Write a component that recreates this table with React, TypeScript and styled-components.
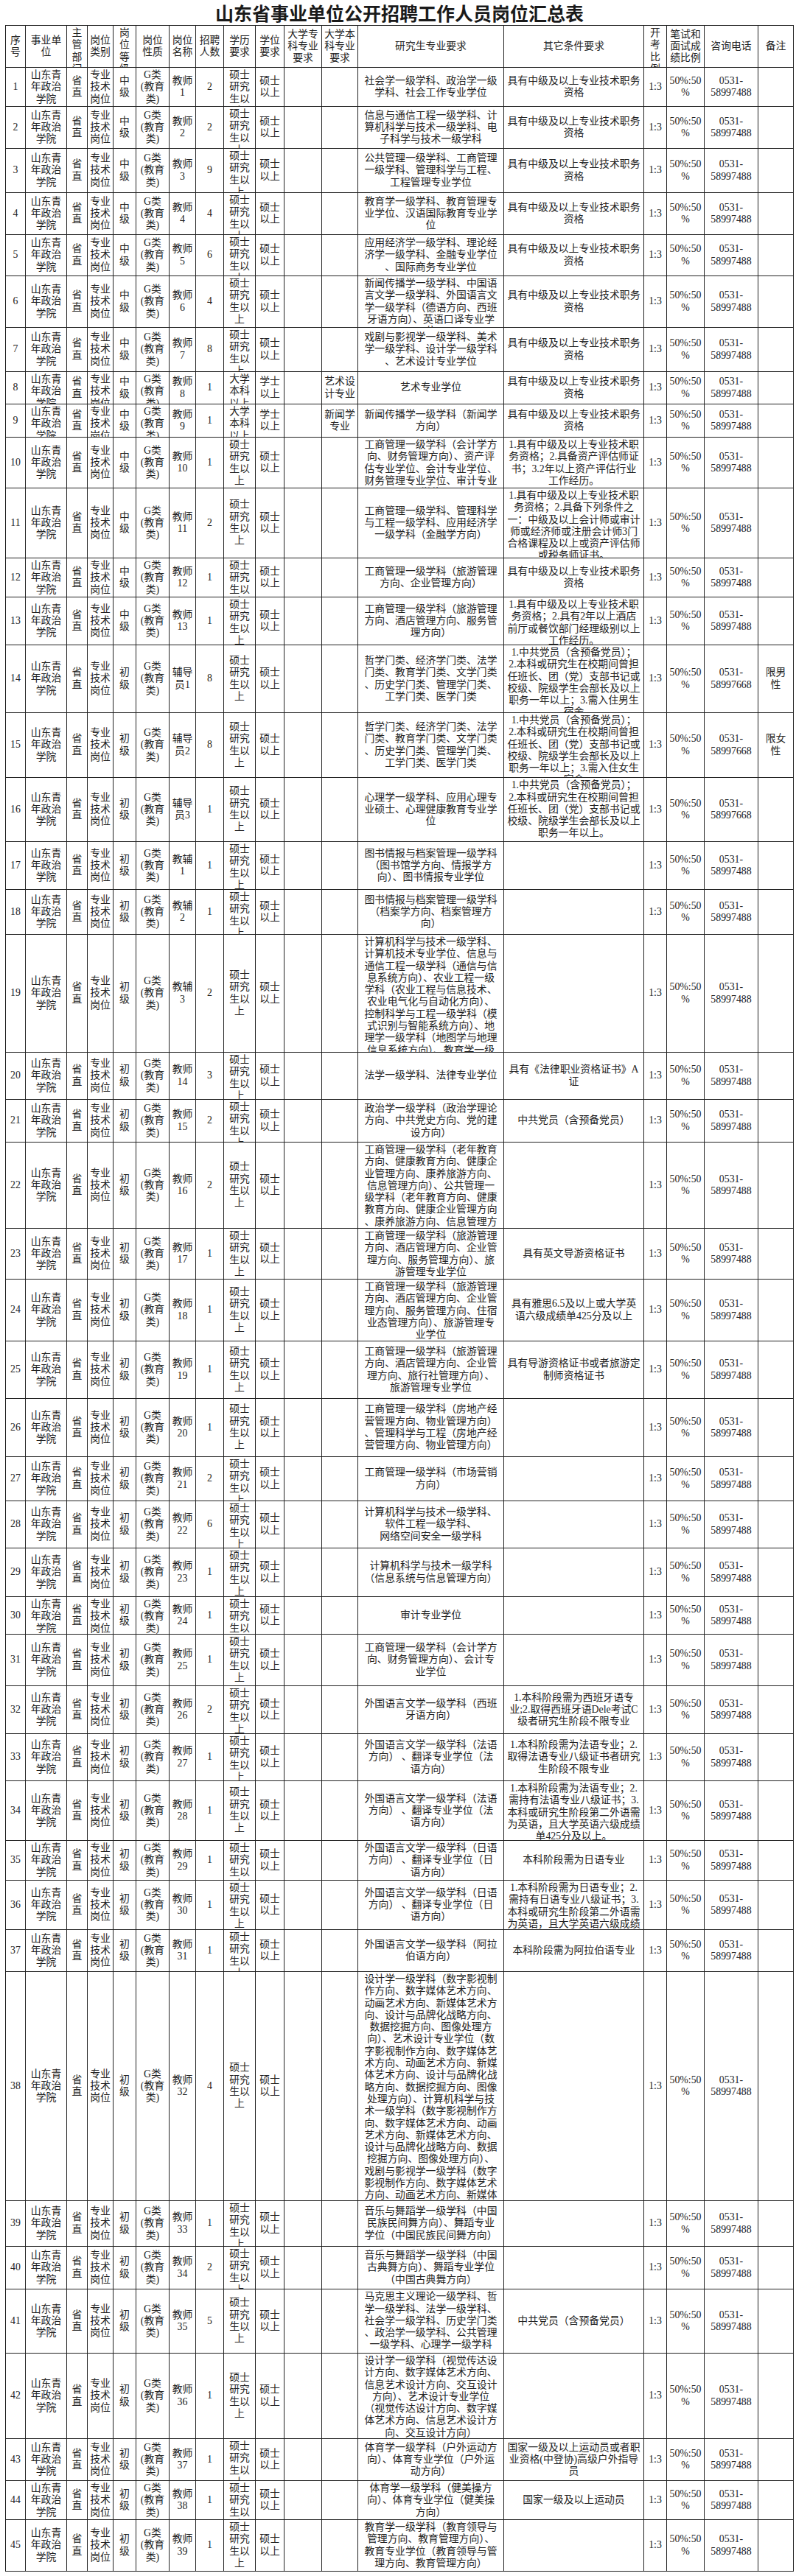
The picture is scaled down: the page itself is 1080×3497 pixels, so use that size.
import styled, { createGlobalStyle } from "styled-components"

const GlobalStyle = createGlobalStyle`
  html, body {
    margin: 0;
    padding: 0;
    background: #fff;
  }
  body {
    font-family: "Liberation Serif", "Noto Sans CJK SC", serif;
    color: #222;
  }
`

const COLS =
  "27px 56px 28px 35px 31px 45px 36px 38px 43px 39px 51px 49px 198px 190px 31px 51px 73px 48px"

const PHONE = "0531-58997488"
const QUAL = "具有中级及以上专业技术职务\n资格"
const PHIL = "哲学门类、经济学门类、法学\n门类、教育学门类、文学门类\n、历史学门类、管理学门类、\n工学门类、医学门类"
const PARTY = "中共党员（含预备党员）"
const FR = "外国语言文学一级学科（法语\n方向） 、翻译专业学位（法\n语方向）"
const JP = "外国语言文学一级学科（日语\n方向） 、翻译专业学位（日\n语方向）"

const HEAD = [
  "序号", "事业单位", "主管部门", "岗位类别", "岗位等级", "岗位性质", "岗位名称", "招聘人数", "学历要求",
  "学位要求", "大学专科专业要求", "大学本科专业要求", "研究生专业要求", "其它条件要求", "开考比例",
  "笔试和面试成绩比例", "咨询电话", "备注",
]

type Job = {
  h: number
  name: string
  n: number
  grad: string
  other?: string
  bk?: boolean
  ug?: string
  phone?: string
  note?: string
}

const JOBS: Job[] = [
  { h: 53, name: "教师1", n: 2, grad: "社会学一级学科、政治学一级\n学科、社会工作专业学位", other: QUAL },
  { h: 57, name: "教师2", n: 2, grad: "信息与通信工程一级学科、计\n算机科学与技术一级学科、电\n子科学与技术一级学科", other: QUAL },
  { h: 60, name: "教师3", n: 9, grad: "公共管理一级学科、工商管理\n一级学科、管理科学与工程、\n工程管理专业学位", other: QUAL },
  { h: 57, name: "教师4", n: 4, grad: "教育学一级学科、教育管理专\n业学位、汉语国际教育专业学\n位", other: QUAL },
  { h: 56, name: "教师5", n: 6, grad: "应用经济学一级学科、理论经\n济学一级学科、金融专业学位\n、国际商务专业学位", other: QUAL },
  { h: 70, name: "教师6", n: 4, grad: "新闻传播学一级学科、中国语\n言文学一级学科、外国语言文\n学一级学科（德语方向、西班\n牙语方向）、英语口译专业学\n位", other: QUAL },
  { h: 60, name: "教师7", n: 8, grad: "戏剧与影视学一级学科、美术\n学一级学科、设计学一级学科\n、艺术设计专业学位", other: QUAL },
  { h: 44, name: "教师8", n: 1, bk: true, ug: "艺术设计专业", grad: "艺术专业学位", other: QUAL },
  { h: 45, name: "教师9", n: 1, bk: true, ug: "新闻学专业", grad: "新闻传播学一级学科（新闻学\n方向）", other: QUAL },
  { h: 69, name: "教师10", n: 1, grad: "工商管理一级学科（会计学方\n向、财务管理方向）、资产评\n估专业学位、会计专业学位、\n财务管理专业学位、审计专业\n学位", other: "1.具有中级及以上专业技术职\n务资格；2.具备资产评估师证\n书；3.2年以上资产评估行业\n工作经历。" },
  { h: 95, name: "教师11", n: 2, grad: "工商管理一级学科、管理科学\n与工程一级学科、应用经济学\n一级学科（金融学方向）", other: "1.具有中级及以上专业技术职\n务资格；2.具备下列条件之\n一：中级及以上会计师或审计\n师或经济师或注册会计师3门\n合格课程及以上或资产评估师\n或税务师证书。" },
  { h: 53, name: "教师12", n: 1, grad: "工商管理一级学科（旅游管理\n方向、企业管理方向）", other: QUAL },
  { h: 65, name: "教师13", n: 1, grad: "工商管理一级学科（旅游管理\n方向、酒店管理方向、服务管\n理方向）", other: "1.具有中级及以上专业技术职\n务资格；2.具有2年以上酒店\n前厅或餐饮部门经理级别以上\n工作经历。" },
  { h: 92, name: "辅导员1", n: 8, grad: PHIL, other: "1.中共党员（含预备党员）；\n2.本科或研究生在校期间曾担\n任班长、团（党）支部书记或\n校级、院级学生会部长及以上\n职务一年以上；3.需入住男生\n宿舍", phone: "0531-58997668", note: "限男性" },
  { h: 88, name: "辅导员2", n: 8, grad: PHIL, other: "1.中共党员（含预备党员）；\n2.本科或研究生在校期间曾担\n任班长、团（党）支部书记或\n校级、院级学生会部长及以上\n职务一年以上；3.需入住女生\n宿舍", phone: "0531-58997668", note: "限女性" },
  { h: 87, name: "辅导员3", n: 1, grad: "心理学一级学科、应用心理专\n业硕士、心理健康教育专业学\n位", other: "1.中共党员（含预备党员）；\n2.本科或研究生在校期间曾担\n任班长、团（党）支部书记或\n校级、院级学生会部长及以上\n职务一年以上。", phone: "0531-58997668" },
  { h: 65, name: "教辅1", n: 1, grad: "图书情报与档案管理一级学科\n（图书馆学方向、情报学方\n向）、图书情报专业学位" },
  { h: 61, name: "教辅2", n: 1, grad: "图书情报与档案管理一级学科\n（档案学方向、档案管理方\n向）" },
  { h: 160, name: "教辅3", n: 2, grad: "计算机科学与技术一级学科、\n计算机技术专业学位、信息与\n通信工程一级学科（通信与信\n息系统方向）、农业工程一级\n学科（农业工程与信息技术、\n农业电气化与自动化方向）、\n控制科学与工程一级学科（模\n式识别与智能系统方向）、地\n理学一级学科（地图学与地理\n信息系统方向）、教育学一级\n学科（教育技术学方向）" },
  { h: 64, name: "教师14", n: 3, grad: "法学一级学科、法律专业学位", other: "具有《法律职业资格证书》A\n证" },
  { h: 58, name: "教师15", n: 2, grad: "政治学一级学科（政治学理论\n方向、中共党史方向、党的建\n设方向）", other: PARTY },
  { h: 117, name: "教师16", n: 2, grad: "工商管理一级学科（老年教育\n方向、健康教育方向、健康企\n业管理方向、康养旅游方向、\n信息管理方向）、公共管理一\n级学科（老年教育方向、健康\n教育方向、健康企业管理方向\n、康养旅游方向、信息管理方\n向）" },
  { h: 69, name: "教师17", n: 1, grad: "工商管理一级学科（旅游管理\n方向、酒店管理方向、企业管\n理方向、服务管理方向）、旅\n游管理专业学位", other: "具有英文导游资格证书" },
  { h: 84, name: "教师18", n: 1, grad: "工商管理一级学科（旅游管理\n方向、酒店管理方向、企业管\n理方向、服务管理方向、住宿\n业态管理方向）、旅游管理专\n业学位", other: "具有雅思6.5及以上或大学英\n语六级成绩单425分及以上" },
  { h: 78, name: "教师19", n: 1, grad: "工商管理一级学科（旅游管理\n方向、酒店管理方向、企业管\n理方向、旅行社管理方向）、\n旅游管理专业学位", other: "具有导游资格证书或者旅游定\n制师资格证书" },
  { h: 79, name: "教师20", n: 1, grad: "工商管理一级学科（房地产经\n营管理方向、物业管理方向）\n、管理科学与工程（房地产经\n营管理方向、物业管理方向）" },
  { h: 60, name: "教师21", n: 2, grad: "工商管理一级学科（市场营销\n方向）" },
  { h: 64, name: "教师22", n: 6, grad: "计算机科学与技术一级学科、\n软件工程一级学科、\n网络空间安全一级学科" },
  { h: 66, name: "教师23", n: 1, grad: "计算机科学与技术一级学科\n（信息系统与信息管理方向）" },
  { h: 51, name: "教师24", n: 1, grad: "审计专业学位" },
  { h: 70, name: "教师25", n: 1, grad: "工商管理一级学科（会计学方\n向、财务管理方向）、会计专\n业学位" },
  { h: 65, name: "教师26", n: 2, grad: "外国语言文学一级学科（西班\n牙语方向）", other: "1.本科阶段需为西班牙语专\n业;2.取得西班牙语Dele考试C\n级者研究生阶段不限专业" },
  { h: 64, name: "教师27", n: 1, grad: FR, other: "1.本科阶段需为法语专业；2.\n取得法语专业八级证书者研究\n生阶段不限专业" },
  { h: 81, name: "教师28", n: 1, grad: FR, other: "1.本科阶段需为法语专业；2.\n需持有法语专业八级证书；3.\n本科或研究生阶段第二外语需\n为英语，且大学英语六级成绩\n单425分及以上。" },
  { h: 54, name: "教师29", n: 1, grad: JP, other: "本科阶段需为日语专业" },
  { h: 67, name: "教师30", n: 1, grad: JP, other: "1.本科阶段需为日语专业；2.\n需持有日语专业八级证书；3.\n本科或研究生阶段第二外语需\n为英语，且大学英语六级成绩\n单425分及以上。" },
  { h: 57, name: "教师31", n: 1, grad: "外国语言文学一级学科（阿拉\n伯语方向）", other: "本科阶段需为阿拉伯语专业" },
  { h: 311, name: "教师32", n: 4, grad: "设计学一级学科（数字影视制\n作方向、数字媒体艺术方向、\n动画艺术方向、新媒体艺术方\n向、设计与品牌化战略方向、\n数据挖掘方向、图像处理方\n向）、艺术设计专业学位（数\n字影视制作方向、数字媒体艺\n术方向、动画艺术方向、新媒\n体艺术方向、设计与品牌化战\n略方向、数据挖掘方向、图像\n处理方向）、计算机科学与技\n术一级学科（数字影视制作方\n向、数字媒体艺术方向、动画\n艺术方向、新媒体艺术方向、\n设计与品牌化战略方向、数据\n挖掘方向、图像处理方向）、\n戏剧与影视学一级学科（数字\n影视制作方向、数字媒体艺术\n方向、动画艺术方向、新媒体\n艺术方向）" },
  { h: 62, name: "教师33", n: 1, grad: "音乐与舞蹈学一级学科（中国\n民族民间舞方向）、舞蹈专业\n学位（中国民族民间舞方向）" },
  { h: 58, name: "教师34", n: 2, grad: "音乐与舞蹈学一级学科（中国\n古典舞方向）、舞蹈专业学位\n（中国古典舞方向）" },
  { h: 87, name: "教师35", n: 5, grad: "马克思主义理论一级学科、哲\n学一级学科、法学一级学科、\n社会学一级学科、历史学门类\n、政治学一级学科、公共管理\n一级学科、心理学一级学科", other: PARTY },
  { h: 116, name: "教师36", n: 1, grad: "设计学一级学科（视觉传达设\n计方向、数字媒体艺术方向、\n信息艺术设计方向、交互设计\n方向）、艺术设计专业学位\n（视觉传达设计方向、数字媒\n体艺术方向、信息艺术设计方\n向、交互设计方向）" },
  { h: 57, name: "教师37", n: 1, grad: "体育学一级学科（户外运动方\n向）、体育专业学位（户外运\n动方向）", other: "国家一级及以上运动员或者职\n业资格(中登协)高级户外指导\n员" },
  { h: 53, name: "教师38", n: 1, grad: "体育学一级学科（健美操方\n向）、体育专业学位（健美操\n方向）", other: "国家一级及以上运动员" },
  { h: 70, name: "教师39", n: 1, grad: "教育学一级学科（教育领导与\n管理方向、教育管理方向）、\n教育专业学位（教育领导与管\n理方向、教育管理方向）" },
]

const Page = styled.div`
  width: 1080px;
  padding-left: 7px;
  box-sizing: border-box;
`

const Title = styled.h1`
  margin: 0;
  width: 1070px;
  height: 34px;
  line-height: 34px;
  text-align: center;
  font-family: "Noto Sans CJK SC", sans-serif;
  font-size: 25px;
  font-weight: 700;
  color: #1a1a1a;
`

const Sheet = styled.div`
  width: 1070px;
  border-left: 1px solid #222;
  border-top: 1px solid #222;
  box-sizing: border-box;
`

const Row = styled.div<{ $h: number }>`
  display: grid;
  grid-template-columns: ${COLS};
  height: ${(p) => p.$h}px;
  border-bottom: 1px solid #222;
  box-sizing: border-box;
`

const Cell = styled.div<{ $pre?: boolean; $strict?: boolean }>`
  display: flex;
  flex-direction: column;
  justify-content: safe center;
  align-items: center;
  min-width: 0;
  overflow: hidden;
  padding: 2px 3px;
  box-sizing: border-box;
  border-right: 1px solid #222;
  text-align: center;
  font-size: 13.85px;
  line-height: 16.3px;
  white-space: ${(p) => (p.$pre ? "pre-line" : "normal")};
  line-break: ${(p) => (p.$strict ? "auto" : "anywhere")};
`

export default function App() {
  return (
    <>
      <GlobalStyle />
      <Page>
        <Title>山东省事业单位公开招聘工作人员岗位汇总表</Title>
        <Sheet>
          <Row $h={57}>
            {HEAD.map((t) => (
              <Cell key={t}>{t}</Cell>
            ))}
          </Row>
          {JOBS.map((j, i) => (
            <Row key={j.name} $h={j.h}>
              <Cell>{i + 1}</Cell>
              <Cell>山东青年政治学院</Cell>
              <Cell>省直</Cell>
              <Cell>专业技术岗位</Cell>
              <Cell>{i < 13 ? "中级" : "初级"}</Cell>
              <Cell $strict>G类(教育类)</Cell>
              <Cell>{j.name}</Cell>
              <Cell>{j.n}</Cell>
              <Cell>{j.bk ? "大学本科以上" : "硕士研究生以上"}</Cell>
              <Cell>{j.bk ? "学士以上" : "硕士以上"}</Cell>
              <Cell />
              <Cell>{j.ug}</Cell>
              <Cell $pre>{j.grad}</Cell>
              <Cell $pre>{j.other}</Cell>
              <Cell>1:3</Cell>
              <Cell>50%:50%</Cell>
              <Cell $strict>{j.phone ?? PHONE}</Cell>
              <Cell>{j.note}</Cell>
            </Row>
          ))}
        </Sheet>
      </Page>
    </>
  )
}
